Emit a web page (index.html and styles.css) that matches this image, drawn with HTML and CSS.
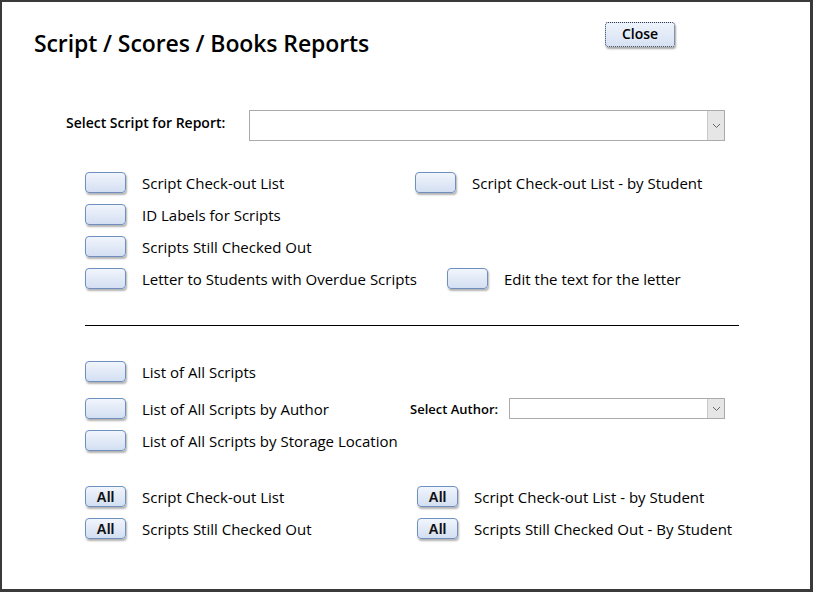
FILE: index.html
```html
<!DOCTYPE html>
<html>
<head>
<meta charset="utf-8">
<link rel="stylesheet" href="styles.css">
</head>
<body>
<div class="window">
  <div class="header">
    <h1 class="title">Script / Scores / Books Reports</h1>
    <button class="close-btn">Close</button>
  </div>

  <div class="select-row">
    <span class="select-label">Select Script for Report:</span>
    <div class="combo combo-script"><span class="combo-arrow"><svg width="9" height="6" viewBox="0 0 9 6"><path d="M1 1 L4.5 4.5 L8 1" fill="none" stroke="#666" stroke-width="1"/></svg></span></div>
  </div>

  <div class="section sec1">
    <div class="row">
      <div class="item w330"><span class="btn"></span><span class="label">Script Check-out List</span></div>
      <div class="item"><span class="btn"></span><span class="label">Script Check-out List - by Student</span></div>
    </div>
    <div class="row">
      <div class="item"><span class="btn"></span><span class="label">ID Labels for Scripts</span></div>
    </div>
    <div class="row">
      <div class="item"><span class="btn"></span><span class="label">Scripts Still Checked Out</span></div>
    </div>
    <div class="row">
      <div class="item w362"><span class="btn"></span><span class="label">Letter to Students with Overdue Scripts</span></div>
      <div class="item"><span class="btn"></span><span class="label">Edit the text for the letter</span></div>
    </div>
  </div>

  <hr class="divider">

  <div class="section sec2">
    <div class="row">
      <div class="item"><span class="btn"></span><span class="label">List of All Scripts</span></div>
    </div>
    <div class="row row-author">
      <div class="item w325"><span class="btn"></span><span class="label">List of All Scripts by Author</span></div>
      <span class="author-label">Select Author:</span>
      <div class="combo combo-author"><span class="combo-arrow small"><svg width="9" height="6" viewBox="0 0 9 6"><path d="M1 1 L4.5 4.5 L8 1" fill="none" stroke="#666" stroke-width="1"/></svg></span></div>
    </div>
    <div class="row">
      <div class="item"><span class="btn"></span><span class="label">List of All Scripts by Storage Location</span></div>
    </div>
  </div>

  <div class="section sec3">
    <div class="row">
      <div class="item w332"><span class="btn">All</span><span class="label">Script Check-out List</span></div>
      <div class="item"><span class="btn">All</span><span class="label">Script Check-out List - by Student</span></div>
    </div>
    <div class="row">
      <div class="item w332"><span class="btn">All</span><span class="label">Scripts Still Checked Out</span></div>
      <div class="item"><span class="btn">All</span><span class="label">Scripts Still Checked Out - By Student</span></div>
    </div>
  </div>
</div>
</body>
</html>
```

FILE: styles.css
```css
* { box-sizing: border-box; }
html, body { margin: 0; padding: 0; background: #fff; }
body { font-family: "Open Sans", "Noto Sans", sans-serif; color: #000; }

.window {
  width: 813px;
  height: 592px;
  border-style: solid;
  border-color: #3a3a3a;
  border-width: 2px 3px 3px 2px;
  background: #fff;
  overflow: hidden;
}

.header {
  display: flex;
  align-items: flex-start;
  padding: 20px 0 0 32px;
  height: 108px;
}
.title {
  margin: 6px 0 0 0;
  flex: 1;
  font-size: 23px;
  font-weight: 600;
  letter-spacing: -0.1px;
  line-height: 30px;
}
.close-btn {
  width: 70px;
  height: 25px;
  margin-right: 135px;
  font-family: "Open Sans", sans-serif;
  font-size: 14px;
  font-weight: 600;
  color: #000;
  border: 1px dotted #2b3b55;
  border-radius: 3px;
  background: linear-gradient(#eef3fb, #d6e2f3);
  box-shadow: 1px 2px 2px rgba(0,0,0,0.35);
  padding: 0 0 2px 0;
}

.select-row {
  display: flex;
  align-items: center;
  padding-left: 64px;
  height: 31px;
}
.select-label {
  width: 183px;
  font-size: 14px;
  font-weight: 600;
  margin-top: -6px;
  white-space: nowrap;
}
.combo {
  border: 1px solid #ababab;
  background: #fff;
  display: flex;
  justify-content: flex-end;
}
.combo-script { width: 476px; height: 31px; }
.combo-arrow {
  width: 17px;
  height: 100%;
  background: #e6e6e6;
  border-left: 1px solid #c8c8c8;
  display: flex;
  align-items: center;
  justify-content: center;
}

.section { padding-left: 83px; }
.sec1 { margin-top: 31px; }
.row {
  display: flex;
  align-items: center;
  height: 21px;
  margin-bottom: 11px;
}
.item { display: flex; align-items: center; }
.w330 { width: 330px; }
.w362 { width: 362px; }
.w325 { width: 325px; }
.w332 { width: 332px; }

.btn {
  display: inline-flex;
  align-items: center;
  justify-content: center;
  width: 41px;
  height: 21px;
  border: 1px solid #6f8fbf;
  border-radius: 4px;
  background: linear-gradient(#f1f5fc, #d3dff2);
  box-shadow: 1px 2px 2px rgba(0,0,0,0.3);
  font-family: "Liberation Sans", Arial, sans-serif;
  font-size: 14px;
  font-weight: 700;
  color: #111;
  flex-shrink: 0;
}
.label {
  margin-left: 16px;
  font-size: 15px;
  white-space: nowrap;
}

.divider {
  margin: 36px 0 0 83px;
  width: 654px;
  border: 0;
  border-top: 1px solid #000;
  height: 0;
}

.sec2 { margin-top: 35px; }
.sec2 .row:nth-child(1) { margin-bottom: 16px; }
.author-label {
  font-size: 13px;
  font-weight: 600;
  width: 99px;
  white-space: nowrap;
}
.combo-author { width: 216px; height: 21px; }

.sec3 { margin-top: 35px; }
```
